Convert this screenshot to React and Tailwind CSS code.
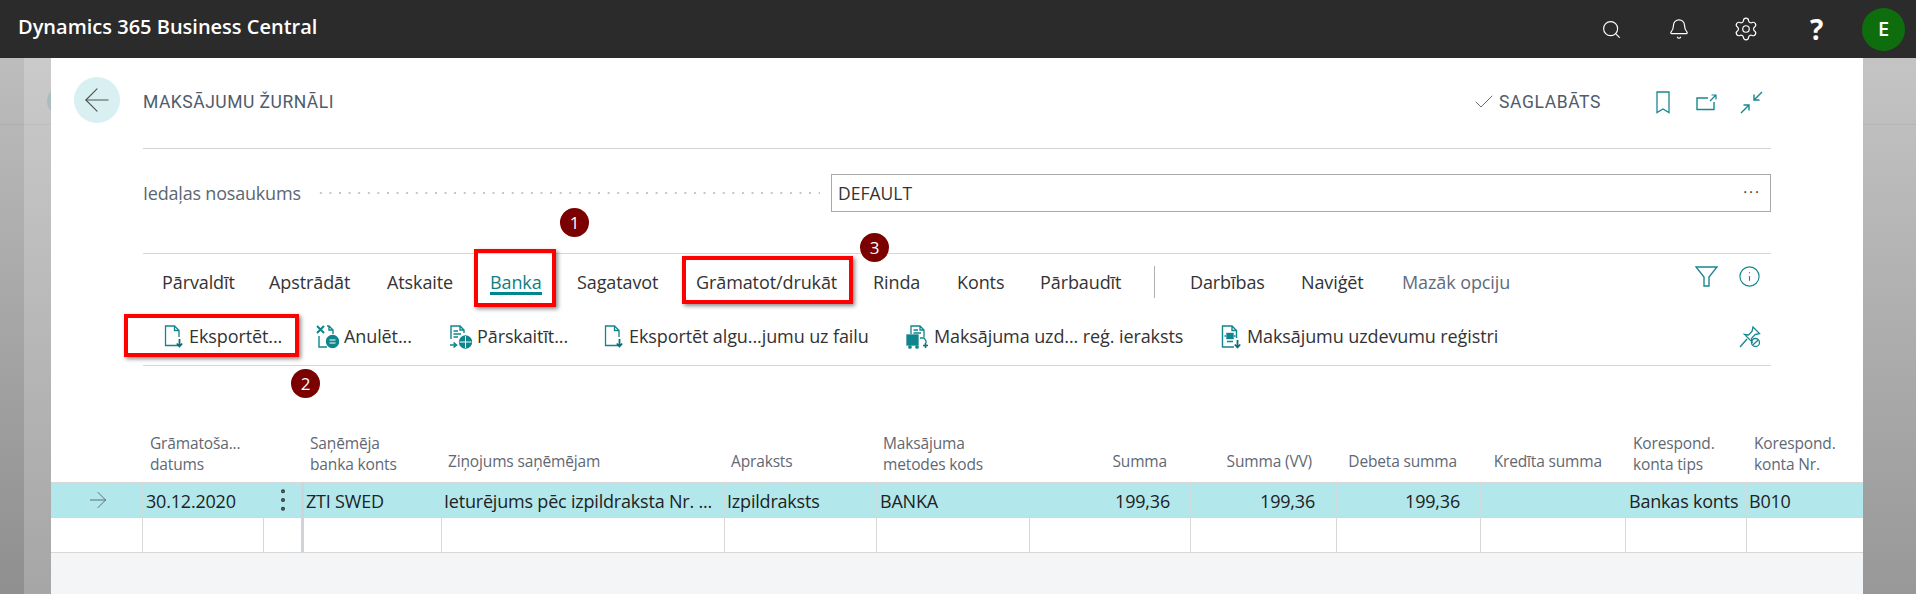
import React from 'react';
import { Search, Bell, Settings, Check, Info, ArrowLeft, ArrowRight, EllipsisVertical } from 'lucide-react';

const tabs = [
    { label: 'Pārvaldīt', w: 'w-[107px]' },
    { label: 'Apstrādāt', w: 'w-[118px]' },
    { label: 'Atskaite', w: 'w-[103px]' },
    { label: 'Banka', w: 'w-[87px]', active: true },
    { label: 'Sagatavot', w: 'w-[119px]' },
    { label: 'Grāmatot/drukāt', w: 'w-[177px]' },
    { label: 'Rinda', w: 'w-[84px]' },
    { label: 'Konts', w: 'w-[83px]' },
    { label: 'Pārbaudīt', w: 'w-[114px]' },
];

const ExportIcon = () => (
    <svg width="20" height="24" viewBox="0 0 20 24" fill="none" stroke="#0f858c" strokeWidth="1.3">
        <path d="M14 20.5H1.5V1H10.5L15 5.5V12" />
        <path d="M10.5 1V5.5H15" />
        <path d="M15.5 14V21M12.8 18.5L15.5 21.5L18.2 18.5" strokeWidth="1.8" stroke="#0b6f75" />
    </svg>
);

const CancelIcon = () => (
    <svg width="23" height="24" viewBox="0 0 23 24" fill="none" stroke="#0f858c" strokeWidth="1.4">
        <path d="M1 1L8 8M8 1L1 8" strokeWidth="2" />
        <path d="M11 1H13L17 5V9M13 1V5H17" />
        <path d="M3 11V22H11" />
        <circle cx="16.5" cy="16.5" r="6" fill="#0f858c" />
        <path d="M13.5 15H19.5M13.5 18H19.5" stroke="#fff" strokeWidth="1.2" />
    </svg>
);

const TransferIcon = () => (
    <svg width="23" height="24" viewBox="0 0 23 24" fill="none" stroke="#0f858c" strokeWidth="1.4">
        <path d="M2 14V1H11L15 5V8M11 1V5H15" />
        <path d="M4.5 6H9M4.5 9H12M4.5 12H9" />
        <path d="M1 20H7M4.5 17.5L7.5 20L4.5 22.5" strokeWidth="1.6" />
        <circle cx="16.5" cy="17" r="6" fill="#0f858c" />
        <path d="M10.5 17H22.5M16.5 11V23" stroke="#fff" strokeWidth="1" />
    </svg>
);

const TruckDocIcon = () => (
    <svg width="23" height="24" viewBox="0 0 23 24" fill="none" stroke="#0f858c" strokeWidth="1.3">
        <path d="M5 9V1H14L18 5V12M14 1V5H18" />
        <path d="M7.5 5H12M7.5 8H15" />
        <rect x="1" y="10" width="11" height="10" fill="#0f858c" />
        <path d="M14 13H18L20 16V18" />
        <path d="M17 20.5H22M19.5 18V23" strokeWidth="1.6" stroke="#0b6f75" />
        <circle cx="4" cy="22" r="1.2" fill="#0f858c" />
        <circle cx="11" cy="22" r="1.2" fill="#0f858c" />
    </svg>
);

const RegisterIcon = () => (
    <svg width="21" height="24" viewBox="0 0 21 24" fill="none" stroke="#0f858c" strokeWidth="1.4">
        <path d="M13 22H1.5V1H11L15.5 5.5V13M11 1V5.5H15.5" />
        <rect x="6" y="8.5" width="6" height="5" fill="#0f858c" />
        <path d="M3.5 11H5M13 11H14.5M6 16.5H12" />
        <path d="M16.5 15V22M13.8 19.5L16.5 22.5L19.2 19.5" strokeWidth="1.8" stroke="#0b6f75" />
    </svg>
);

const BookmarkIcon = () => (
    <svg width="14" height="23" viewBox="0 0 14 23" fill="none" stroke="#17888f" strokeWidth="1.3">
        <path d="M1 1H13V21.5L7 18L1 21.5Z" />
    </svg>
);

const OpenIcon = () => (
    <svg width="21" height="17" viewBox="0 0 21 17" fill="none" stroke="#17888f" strokeWidth="1.4">
        <path d="M12 4H1V15.5H18V8" />
        <path d="M14 7L20 1M15.5 1H20V5.5" strokeWidth="1.2" />
    </svg>
);

const CollapseIcon = () => (
    <svg width="23" height="23" viewBox="0 0 23 23" fill="none" stroke="#17888f" strokeWidth="1.4">
        <path d="M22 1L14 9M14 3.5V9H19.5" />
        <path d="M1 22L9 14M3.5 14H9V19.5" />
    </svg>
);

const FilterIcon = () => (
    <svg width="23" height="21" viewBox="0 0 23 21" fill="none" stroke="#17888f" strokeWidth="1.4">
        <path d="M1 1H22L14 11V20H9V11Z" />
    </svg>
);

const PinIcon = () => (
    <svg width="22" height="22" viewBox="0 0 22 22" fill="none" stroke="#17888f" strokeWidth="1.3">
        <path d="M14 1L20.5 7.5L16 8.5L12.5 12.5L13 16L5.5 8.5L9.5 9L13 5.5Z" />
        <path d="M8 13L1 21" />
        <circle cx="16.5" cy="16.5" r="4" />
        <path d="M13.8 19L19.2 14" />
    </svg>
);

// header cells, the row below uses the same grid
const columns = [
    { cell: '' },
    { head: ['Grāmatoša...', 'datums'], value: '30.12.2020', headCls: 'pl-[8px]', cellCls: 'pl-[3px]' },
    { cell: 'menu' },
    { head: ['Saņēmēja', 'banka konts'], value: 'ZTI SWED', headCls: 'pl-[9px]', cellCls: 'pl-[2px]' },
    { head: ['Ziņojums saņēmējam'], value: 'Ieturējums pēc izpildraksta Nr. ...', headCls: 'pl-[7px]', cellCls: 'pl-[2px]' },
    { head: ['Apraksts'], value: 'Izpildraksts', headCls: 'pl-[7px]', cellCls: 'pl-[2px]' },
    { head: ['Maksājuma', 'metodes kods'], value: 'BANKA', headCls: 'pl-[7px]', cellCls: 'pl-[3px]' },
    { head: ['Summa'], value: '199,36', right: true, headCls: 'pr-[23px]', cellCls: 'pr-[20px]' },
    { head: ['Summa (VV)'], value: '199,36', right: true, headCls: 'pr-[24px]', cellCls: 'pr-[21px]' },
    { head: ['Debeta summa'], value: '199,36', right: true, headCls: 'pr-[23px]', cellCls: 'pr-[20px]' },
    { head: ['Kredīta summa'], value: '', right: true, headCls: 'pr-[23px]', cellCls: 'pr-[20px]' },
    { head: ['Korespond.', 'konta tips'], value: 'Bankas konts', headCls: 'pl-[8px]', cellCls: 'pl-[3px]' },
    { head: ['Korespond.', 'konta Nr.'], value: 'B010', headCls: 'pl-[8px]', cellCls: 'pl-[2px]' },
];

const gridCols = 'grid grid-cols-[91px_121px_38px_140px_283px_152px_153px_161px_146px_144px_145px_121px_117px]';

const Badge = ({ n, pos }) => (
    <div className={`absolute ${pos} w-[29px] h-[29px] rounded-full bg-[#7b0000] text-white text-[17px] flex items-center justify-center`}>
        {n}
    </div>
);

const RedBox = ({ pos }) => (
    <div className={`absolute ${pos} border-4 border-[#ff0000] shadow-[2px_2px_4px_rgba(0,0,0,0.45)]`} />
);

export default function App() {
    return (
        <div className="relative w-[1916px] h-[594px] overflow-hidden flex flex-col bg-white font-['Open_Sans',sans-serif] text-[#333]">
            <header className="h-[58px] shrink-0 bg-[#2b2b2b] flex items-center pl-[18px] text-white">
                <span className="text-[20px] font-semibold mt-[-4px]">Dynamics 365 Business Central</span>
                <div className="ml-auto flex items-center">
                    <Search className="w-[21px] h-[21px] mr-[46px]" strokeWidth={1.3} />
                    <Bell className="w-[22px] h-[22px] mr-[43px]" strokeWidth={1.3} />
                    <Settings className="w-[26px] h-[26px] mr-[51px]" strokeWidth={1.1} />
                    <span className="text-[28px] font-bold w-[14px] mr-[38px] leading-none">?</span>
                    <div className="w-[43px] h-[43px] rounded-full bg-[#0e6e0e] flex items-center justify-center text-[20px] font-semibold mr-[11px]">E</div>
                </div>
            </header>

            <div className="flex-1 flex min-h-0">
                <div className="w-[24px] bg-gradient-to-b from-[#bdbdbd] to-[#8f8f8f]">
                    <div className="h-[67px] border-b border-[#b0b0b0]" />
                </div>
                <div className="relative w-[27px] bg-gradient-to-b from-[#cacaca] to-[#a6a6a6] overflow-hidden">
                    <div className="h-[67px] border-b border-[#bcbcbc]" />
                    <div className="absolute left-[23px] top-[29px] w-[28px] h-[28px] rounded-full bg-[#a9bcc0]" />
                </div>

                <main className="w-[1812px] flex flex-col">
                    <div className="px-[92px]">
                        <div className="relative flex items-center h-[91px] border-b border-[#d0d3d8]">
                            {/* back button hangs out to the left of the content column */}
                            <div className="absolute left-[-69px] top-[19px] w-[46px] h-[46px] rounded-full bg-[#d8f0f2] flex items-center justify-center">
                                <ArrowLeft className="w-[38px] h-[38px] text-[#505050]" strokeWidth={0.7} />
                            </div>
                            <span className="font-['Roboto',sans-serif] text-[17.5px] tracking-[0.5px] text-[#505c6d] mt-[-2px]">MAKSĀJUMU ŽURNĀLI</span>
                            <div className="ml-auto flex items-center mt-[-2px] mr-[8px]">
                                <Check className="w-[24px] h-[24px] text-[#505c6d] mr-[3px]" strokeWidth={0.9} />
                                <span className="font-['Roboto',sans-serif] text-[17.5px] tracking-[0.6px] text-[#505c6d] mr-[55px]">SAGLABĀTS</span>
                                <BookmarkIcon />
                                <div className="w-[26px]" />
                                <OpenIcon />
                                <div className="w-[23px]" />
                                <CollapseIcon />
                            </div>
                        </div>

                        <div className="flex items-center mt-[25px] h-[38px]">
                            <span className="text-[18px] tracking-[-0.2px] text-[#5c6672] w-[173px]">Iedaļas nosaukums</span>
                            <div className="w-[504px] h-[4px] bg-[radial-gradient(circle,#c4c4c4_1px,transparent_1.2px)] bg-[length:9.6px_4px]" />
                            <div className="ml-[11px] flex-1 h-[38px] border border-[#a8a8a8] flex items-center justify-between pl-[6px] pr-[9px] text-[17.5px] text-[#333]">
                                <span>DEFAULT</span>
                                <span className="text-[15px] tracking-[2px] leading-none mt-[-4px]">···</span>
                            </div>
                        </div>

                        <div className="mt-[41px] border-t border-[#d8d8d8] h-[57px] flex items-center pl-[19px] text-[18px] tracking-[-0.1px] relative">
                            {tabs.map((t) => (
                                <div key={t.label} className={`${t.w} whitespace-nowrap`}>
                                    <span className={t.active ? 'relative inline-block text-[#0c7f86]' : 'inline-block'}>
                                        {t.label}
                                        {t.active && <span className="absolute left-0 right-0 bottom-[1px] h-[3px] bg-[#00868d]" />}
                                    </span>
                                </div>
                            ))}
                            <div className="w-px h-[32px] bg-[#b0b0b0]" />
                            <div className="w-[35px]" />
                            <div className="w-[111px]">Darbības</div>
                            <div className="w-[101px]">Naviģēt</div>
                            <div className="text-[#5f6b7a]">Mazāk opciju</div>
                            <div className="ml-auto flex items-center gap-[20px] pr-[10px] mt-[-11px]">
                                <FilterIcon />
                                <Info className="w-[23px] h-[23px] text-[#17888f]" strokeWidth={1.2} />
                            </div>
                        </div>

                        <div className="h-[56px] border-b border-[#d8d8d8] flex items-center text-[18px] tracking-[-0.1px] whitespace-nowrap pb-[2px]">
                            <div className="w-[20px]" />
                            <div className="w-[153px] flex items-center gap-[5px] pl-[1px]"><ExportIcon />Eksportēt...</div>
                            <div className="w-[133px] flex items-center gap-[5px]"><CancelIcon />Anulēt...</div>
                            <div className="w-[155px] flex items-center gap-[5px]"><TransferIcon />Pārskaitīt...</div>
                            <div className="w-[302px] flex items-center gap-[5px]"><ExportIcon />Eksportēt algu...jumu uz failu</div>
                            <div className="w-[315px] flex items-center gap-[5px]"><TruckDocIcon />Maksājuma uzd... reģ. ieraksts</div>
                            <div className="flex items-center gap-[5px]"><RegisterIcon />Maksājumu uzdevumu reģistri</div>
                            <div className="ml-auto pr-[10px]"><PinIcon /></div>
                        </div>
                    </div>

                    <div className={`${gridCols} h-[117px] border-b border-[#d8d8d8] text-[15.5px] leading-[21px] tracking-[-0.15px] text-[#5f6873]`}>
                        {columns.map((c, i) => (
                            <div
                                key={i}
                                className={`flex flex-col justify-end whitespace-nowrap ${c.head && c.head.length > 1 ? 'pb-[7px]' : 'pb-[10px]'} ${c.right ? 'text-right' : ''} ${c.headCls || ''}`}
                            >
                                {c.head && c.head.map((line) => <span key={line}>{line}</span>)}
                            </div>
                        ))}
                    </div>

                    <div className={`${gridCols} h-[35px] bg-[#b2e8ec] border-b border-[#d0d8da] text-[18px] tracking-[-0.2px] text-[#222]`}>
                        {columns.map((c, i) => (
                            <div
                                key={i}
                                className={`flex items-center min-w-0 whitespace-nowrap pt-[3px] ${i > 0 ? 'border-l border-[#cfdcde]' : ''} ${i === 3 ? 'border-l-[3px] border-l-[#d0d3d8]' : ''} ${c.right ? 'justify-end' : ''} ${c.cell === 'menu' ? 'justify-center' : ''} ${c.cellCls || ''}`}
                            >
                                {i === 0 && <ArrowRight className="ml-[34px] mt-[-3px] w-[26px] h-[26px] text-[#5e6b70]" strokeWidth={0.9} />}
                                {c.cell === 'menu' && <EllipsisVertical className="mt-[-3px] w-[30px] h-[30px] text-[#333]" strokeWidth={1.2} />}
                                {c.value}
                            </div>
                        ))}
                    </div>

                    <div className={`${gridCols} h-[35px] border-b border-[#d8d8d8]`}>
                        {columns.map((c, i) => (
                            <div key={i} className={`${i > 0 ? 'border-l border-[#d8d8d8]' : ''} ${i === 3 ? 'border-l-[3px] border-l-[#d0d3d8]' : ''}`} />
                        ))}
                    </div>

                    <div className="flex-1 bg-[#f4f5f6]" />
                </main>

                <div className="flex-1 bg-gradient-to-b from-[#c4c4c4] to-[#989898]">
                    <div className="h-[67px] border-b border-[#b4b4b4]" />
                </div>
            </div>

            {/* annotations laid over the screenshot */}
            <RedBox pos="left-[474px] top-[249px] w-[82px] h-[58px]" />
            <RedBox pos="left-[682px] top-[256px] w-[171px] h-[48px]" />
            <RedBox pos="left-[124px] top-[314px] w-[175px] h-[43px]" />
            <Badge n="1" pos="left-[560px] top-[208px]" />
            <Badge n="2" pos="left-[291px] top-[369px]" />
            <Badge n="3" pos="left-[860px] top-[233px]" />
        </div>
    );
}
